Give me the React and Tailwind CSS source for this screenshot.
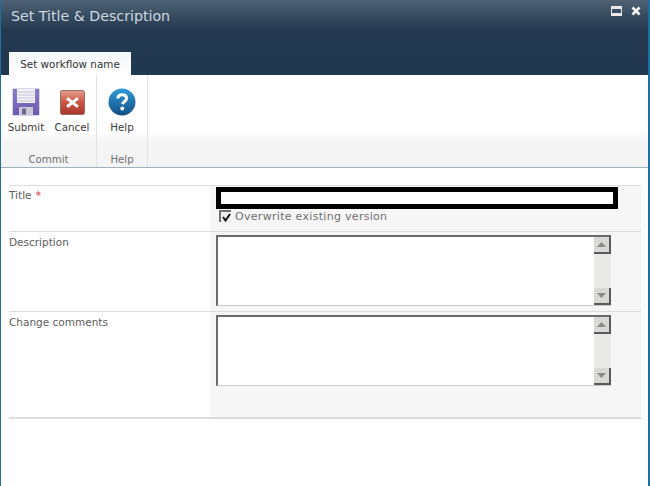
import React from "react";

const font = { fontFamily: '"DejaVu Sans", Verdana, sans-serif' };

function Save() {
  return (
    <svg width="28" height="28" viewBox="0 0 28 28">
      <defs>
        <linearGradient id="s1" x1="0" y1="0" x2="0" y2="1">
          <stop offset="0" stopColor="#8f7fc9" />
          <stop offset="1" stopColor="#6a58ad" />
        </linearGradient>
      </defs>
      <path d="M1 1H27V27H1Z" fill="url(#s1)" stroke="#7b6cb8" strokeWidth="0.6" />
      <rect x="5" y="1" width="18" height="14" fill="#f1f1f6" />
      <path d="M6 4H22M6 7H22M6 10H22M6 13H22" stroke="#c6c6d6" strokeWidth="1" />
      <rect x="7" y="19" width="14" height="8" fill="#c9c9d8" />
      <rect x="10" y="20.5" width="4" height="6" fill="#6a6a96" />
    </svg>
  );
}

function Cancel() {
  return (
    <svg width="25" height="25" viewBox="0 0 26 26">
      <defs>
        <linearGradient id="c1" x1="0" y1="0" x2="0" y2="1">
          <stop offset="0" stopColor="#e6a08e" />
          <stop offset="0.5" stopColor="#cc5442" />
          <stop offset="1" stopColor="#a8372c" />
        </linearGradient>
      </defs>
      <rect x="0.5" y="0.5" width="25" height="25" rx="2" fill="url(#c1)" stroke="#8e6a62" />
      <path d="M8.5 9.5L17.5 16.5M17.5 9.5L8.5 16.5" stroke="#fff" strokeWidth="3" strokeLinecap="square" />
    </svg>
  );
}

function HelpIcon() {
  return (
    <svg width="28" height="28" viewBox="0 0 28 28">
      <defs>
        <linearGradient id="h1" x1="0" y1="0" x2="0" y2="1">
          <stop offset="0" stopColor="#2f9ad8" />
          <stop offset="1" stopColor="#124f86" />
        </linearGradient>
      </defs>
      <circle cx="14" cy="14" r="13.5" fill="url(#h1)" />
      <path d="M9.8 10.5C10 7.8 12 6.8 14.2 6.8C16.8 6.8 18.5 8.3 18.5 10.4C18.5 13.2 15 13.4 14.6 16.2" fill="none" stroke="#fff" strokeWidth="3" />
      <circle cx="14.3" cy="20.5" r="2" fill="#fff" />
    </svg>
  );
}

function Scrollbar() {
  return (
    <div className="w-[17px] bg-[#e9e9e7] flex flex-col justify-between shrink-0">
      <div className="h-[17px] bg-[#d8d8d4] border-r-2 border-b-2 border-[#5a5a5a] flex items-center justify-center">
        <svg width="9" height="5" viewBox="0 0 9 5"><path d="M4.5 0L9 5H0Z" fill="#8a8a8a" /></svg>
      </div>
      <div className="h-[17px] bg-[#d8d8d4] border-r-2 border-b-2 border-[#5a5a5a] flex items-center justify-center">
        <svg width="9" height="5" viewBox="0 0 9 5"><path d="M0 0H9L4.5 5Z" fill="#8a8a8a" /></svg>
      </div>
    </div>
  );
}

function TextBox() {
  return (
    <div className="w-[395px] h-[71px] ml-[6px] flex bg-white border-t-2 border-l-2 border-[#6a6a6a] border-b border-b-[#c8c8c8]">
      <div className="flex-1" />
      <Scrollbar />
    </div>
  );
}

function RibbonButton({ icon, label, className }) {
  return (
    <div className={"flex flex-col items-center " + className}>
      <div className="h-[30px] flex items-center justify-center">{icon}</div>
      <div className="text-[10.3px] leading-[13px] mt-[4px] text-[#3b3b3b] whitespace-nowrap">{label}</div>
    </div>
  );
}

export default function App() {
  return (
    <div style={font} className="w-[650px] h-[486px] bg-white border-l border-l-[#1d6f9f] border-r-2 border-r-[#1d6f9f] overflow-hidden flex flex-col">
      <div className="h-[75px] shrink-0 bg-gradient-to-b from-[#4f6275] via-[#24394f] via-40% to-[#203850] relative flex flex-col">
        <div className="pl-[10px] pt-[7px] text-[14.2px] leading-[18px] text-[#cfd9e2]">Set Title &amp; Description</div>
        <div className="absolute top-[6px] right-[7px] flex items-center gap-[9px]">
          <div className="w-[11px] h-[10px] border border-[#e8e8e8] border-t-[3px] bg-[#3b4f63] flex flex-col justify-end">
            <div className="h-[2px] bg-[#e8e8e8]" />
          </div>
          <svg width="10" height="10" viewBox="0 0 10 10"><path d="M1.5 1.5L8.5 8.5M8.5 1.5L1.5 8.5" stroke="#f4f4f4" strokeWidth="2.6" /></svg>
        </div>
        <div className="mt-auto ml-[8px] w-[122px] h-[23px] pt-[2px] bg-gradient-to-b from-[#f4f6f8] to-white flex items-center justify-center text-[10.4px] text-[#333333]">
          Set workflow name
        </div>
      </div>

      <div className="h-[93px] shrink-0 border-b border-[#9fb0bd] bg-gradient-to-b from-white from-60% to-[#f4f4f4] to-75% flex">
        <div className="w-[96px] border-r border-[#e2e2e2] flex flex-col">
          <div className="flex h-[69px] pt-[12px] text-center">
            <RibbonButton icon={<Save />} label="Submit" className="w-[46px] ml-[2px]" />
            <RibbonButton icon={<Cancel />} label="Cancel" className="w-[46px]" />
          </div>
          <div className="mt-auto h-[22px] pt-[8px] flex items-center justify-center text-[10.2px] text-[#707070]">Commit</div>
        </div>
        <div className="w-[51px] border-r border-[#e2e2e2] flex flex-col">
          <div className="flex justify-center h-[69px] pt-[12px]">
            <RibbonButton icon={<HelpIcon />} label="Help" className="" />
          </div>
          <div className="mt-auto h-[22px] pt-[8px] flex items-center justify-center text-[10.2px] text-[#707070]">Help</div>
        </div>
      </div>

      <div className="mt-[17px] ml-[8px] w-[632px] border-t border-[#dcdcdc] border-b-2 border-b-[#dcdcdc] flex flex-col text-[10.5px] text-[#5c5c5c]">
        <div className="flex h-[46px] border-b border-[#dcdcdc]">
          <div className="w-[201px] pt-[3px] leading-[13px]">
            Title <span className="text-[#e0303a] ml-[1px]">*</span>
          </div>
          <div className="flex-1 bg-[#f6f6f6] pt-px">
            <div className="ml-[6px] w-[402px] h-[22px] bg-white border-[5px] border-black" />
            <div className="flex items-center ml-[9px] h-[14px]">
              <div className="w-[12px] h-[12px] bg-[#ededed] border-t-2 border-l-2 border-[#707070] flex items-center justify-center">
                <svg width="9" height="9" viewBox="0 0 9 9"><path d="M1 4L3.5 7.5L8 1" fill="none" stroke="#111" strokeWidth="2" /></svg>
              </div>
              <span className="ml-[4px] text-[11px] text-[#6e6e6e] tracking-[0.3px] leading-[13px]">Overwrite existing version</span>
            </div>
          </div>
        </div>
        <div className="flex h-[80px] border-b border-[#dcdcdc]">
          <div className="w-[201px] pt-[4px] leading-[13px]">Description</div>
          <div className="flex-1 bg-[#f6f6f6] pt-[3px]"><TextBox /></div>
        </div>
        <div className="flex h-[105px]">
          <div className="w-[201px] pt-[4px] leading-[13px]">Change comments</div>
          <div className="flex-1 bg-[#f6f6f6] pt-[3px]"><TextBox /></div>
        </div>
      </div>
    </div>
  );
}
